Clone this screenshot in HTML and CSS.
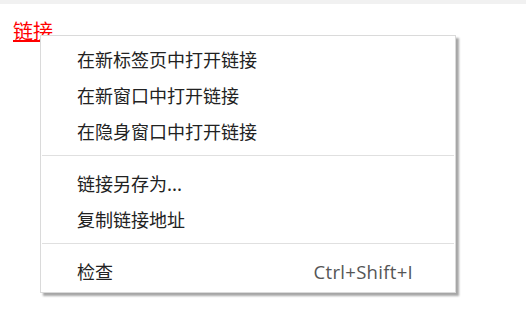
FILE: index.html
```html
<!DOCTYPE html>
<html lang="zh-CN">
<head>
    <meta charset="UTF-8">
    <meta name="viewport" content="width=device-width, initial-scale=1.0">
    <title>链接</title>
    <link rel="stylesheet" href="styles.css">
</head>
<body>
    <div class="topbar"></div>
    <div class="page">
        <a class="link" href="#">链接</a>
    </div>
    <div class="menu">
        <div class="item">在新标签页中打开链接</div>
        <div class="item">在新窗口中打开链接</div>
        <div class="item">在隐身窗口中打开链接</div>
        <div class="sep"></div>
        <div class="item">链接另存为...</div>
        <div class="item">复制链接地址</div>
        <div class="sep"></div>
        <div class="item">
            <span>检查</span>
            <span class="shortcut">Ctrl+Shift+I</span>
        </div>
    </div>
</body>
</html>
```

FILE: styles.css
```css
body {
    margin: 0;
    background-color: white;
    font-family: "Noto Sans CJK SC", "Noto Sans", sans-serif;
    overflow: hidden;
    height: 335px;
    position: relative;
}
.topbar {
    height: 4px;
    background-color: #f1f1f1;
}
.page {
    padding: 13px 0 0 13px;
}
.link {
    color: red;
    font-size: 20px;
    line-height: 28px;
    text-decoration: underline;
}
.menu {
    position: absolute;
    left: 40px;
    top: 35px;
    width: 414px;
    padding: 5px 0 3px 0;
    background-color: white;
    border: 1px solid #dadada;
    box-shadow: 3px 3px 2px rgba(0, 0, 0, 0.35);
}
.item {
    display: flex;
    justify-content: space-between;
    align-items: center;
    height: 36px;
    padding: 0 42px 0 36px;
    font-size: 18px;
    color: #222;
}
.shortcut {
    color: #555;
    font-family: "Open Sans", "Noto Sans", sans-serif;
    font-size: 18.5px;
    letter-spacing: 0.3px;
}
.sep {
    height: 1px;
    margin: 6px 1px 9px 1px;
    background-color: #e0e0e0;
}
```
